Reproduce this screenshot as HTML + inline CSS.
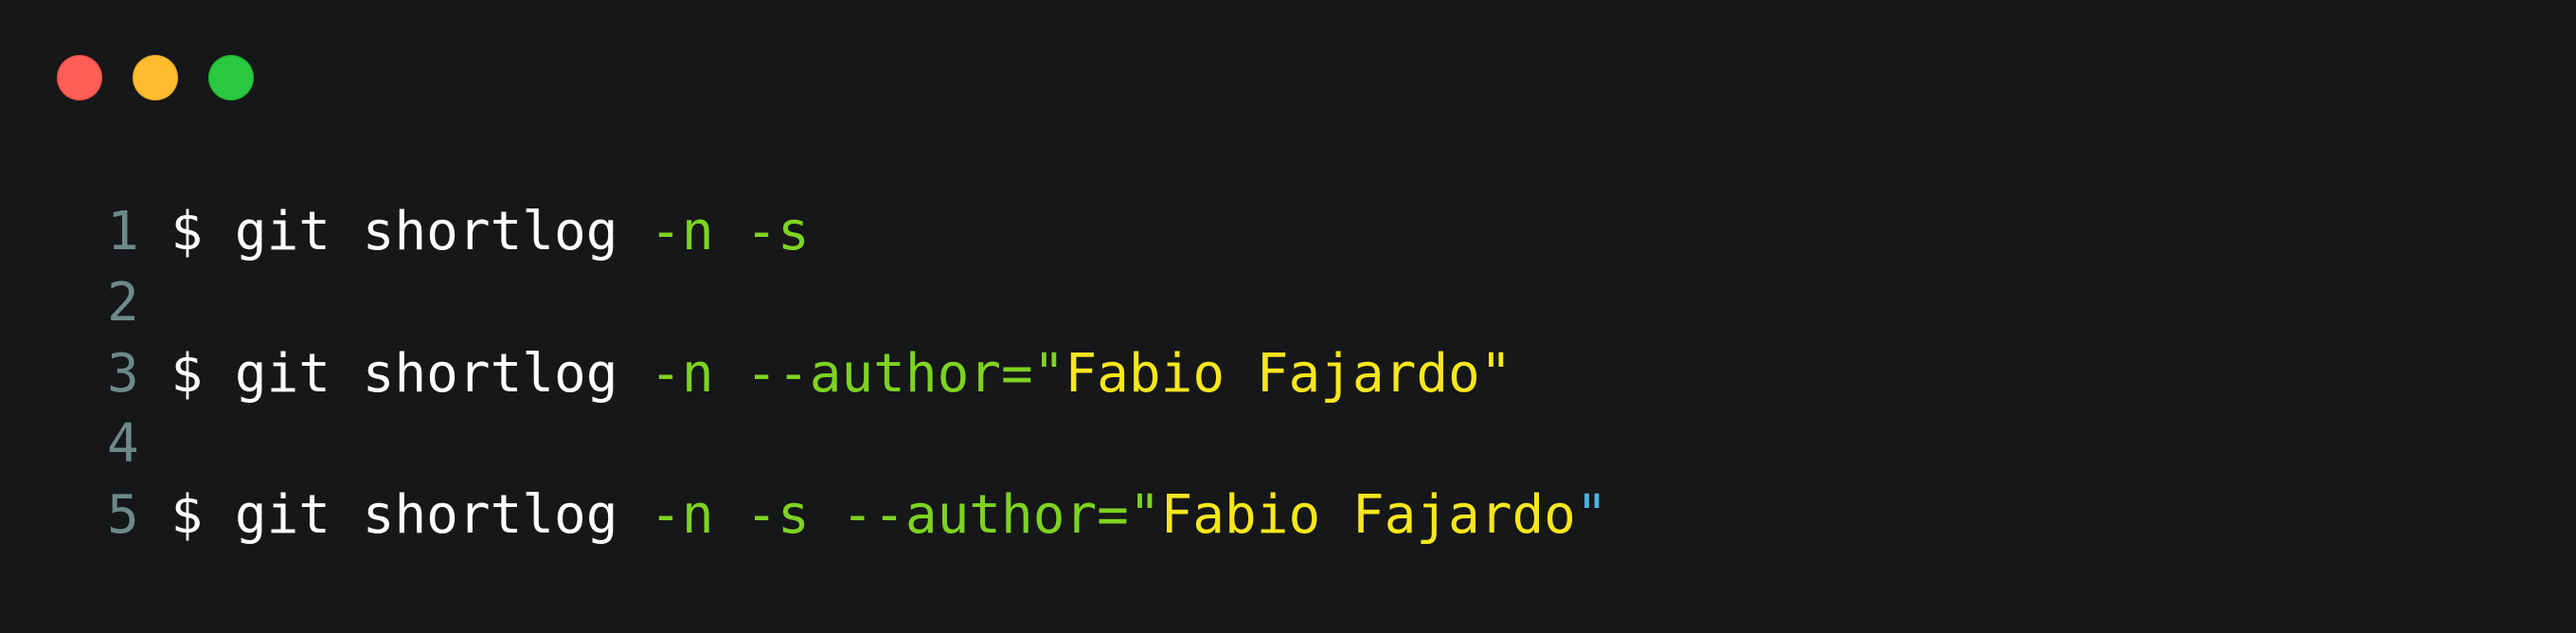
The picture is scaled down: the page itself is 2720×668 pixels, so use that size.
<!DOCTYPE html>
<html><head><meta charset="utf-8"><style>
html,body{margin:0;padding:0;}
body{width:2720px;height:668px;background:#161719;position:relative;overflow:hidden;}
.d{position:absolute;top:58px;width:48px;height:48px;border-radius:50%;}
.code{position:absolute;left:113px;top:208px;font-family:"DejaVu Sans Mono","Liberation Mono",monospace;font-size:56px;line-height:74.8px;color:#ffffff;white-space:pre;margin:0;}
.n{color:#6d8a88}.g{color:#7ed321}.y{color:#f8e71c}.c{color:#4ab4e0}
</style></head><body>
<div class="d" style="left:60px;background:#ff5f57;box-shadow:inset 0 0 0 1px #e0443e"></div>
<div class="d" style="left:140px;background:#febc2e;box-shadow:inset 0 0 0 1px #dea123"></div>
<div class="d" style="left:220px;background:#28c840;box-shadow:inset 0 0 0 1px #1aab29"></div>
<pre class="code"><span class="n">1</span> $ git shortlog <span class="g">-n -s</span>
<span class="n">2</span>
<span class="n">3</span> $ git shortlog <span class="g">-n --author="</span><span class="y">Fabio Fajardo"</span>
<span class="n">4</span>
<span class="n">5</span> $ git shortlog <span class="g">-n -s --author="</span><span class="y">Fabio Fajardo</span><span class="c">"</span></pre>
</body></html>
